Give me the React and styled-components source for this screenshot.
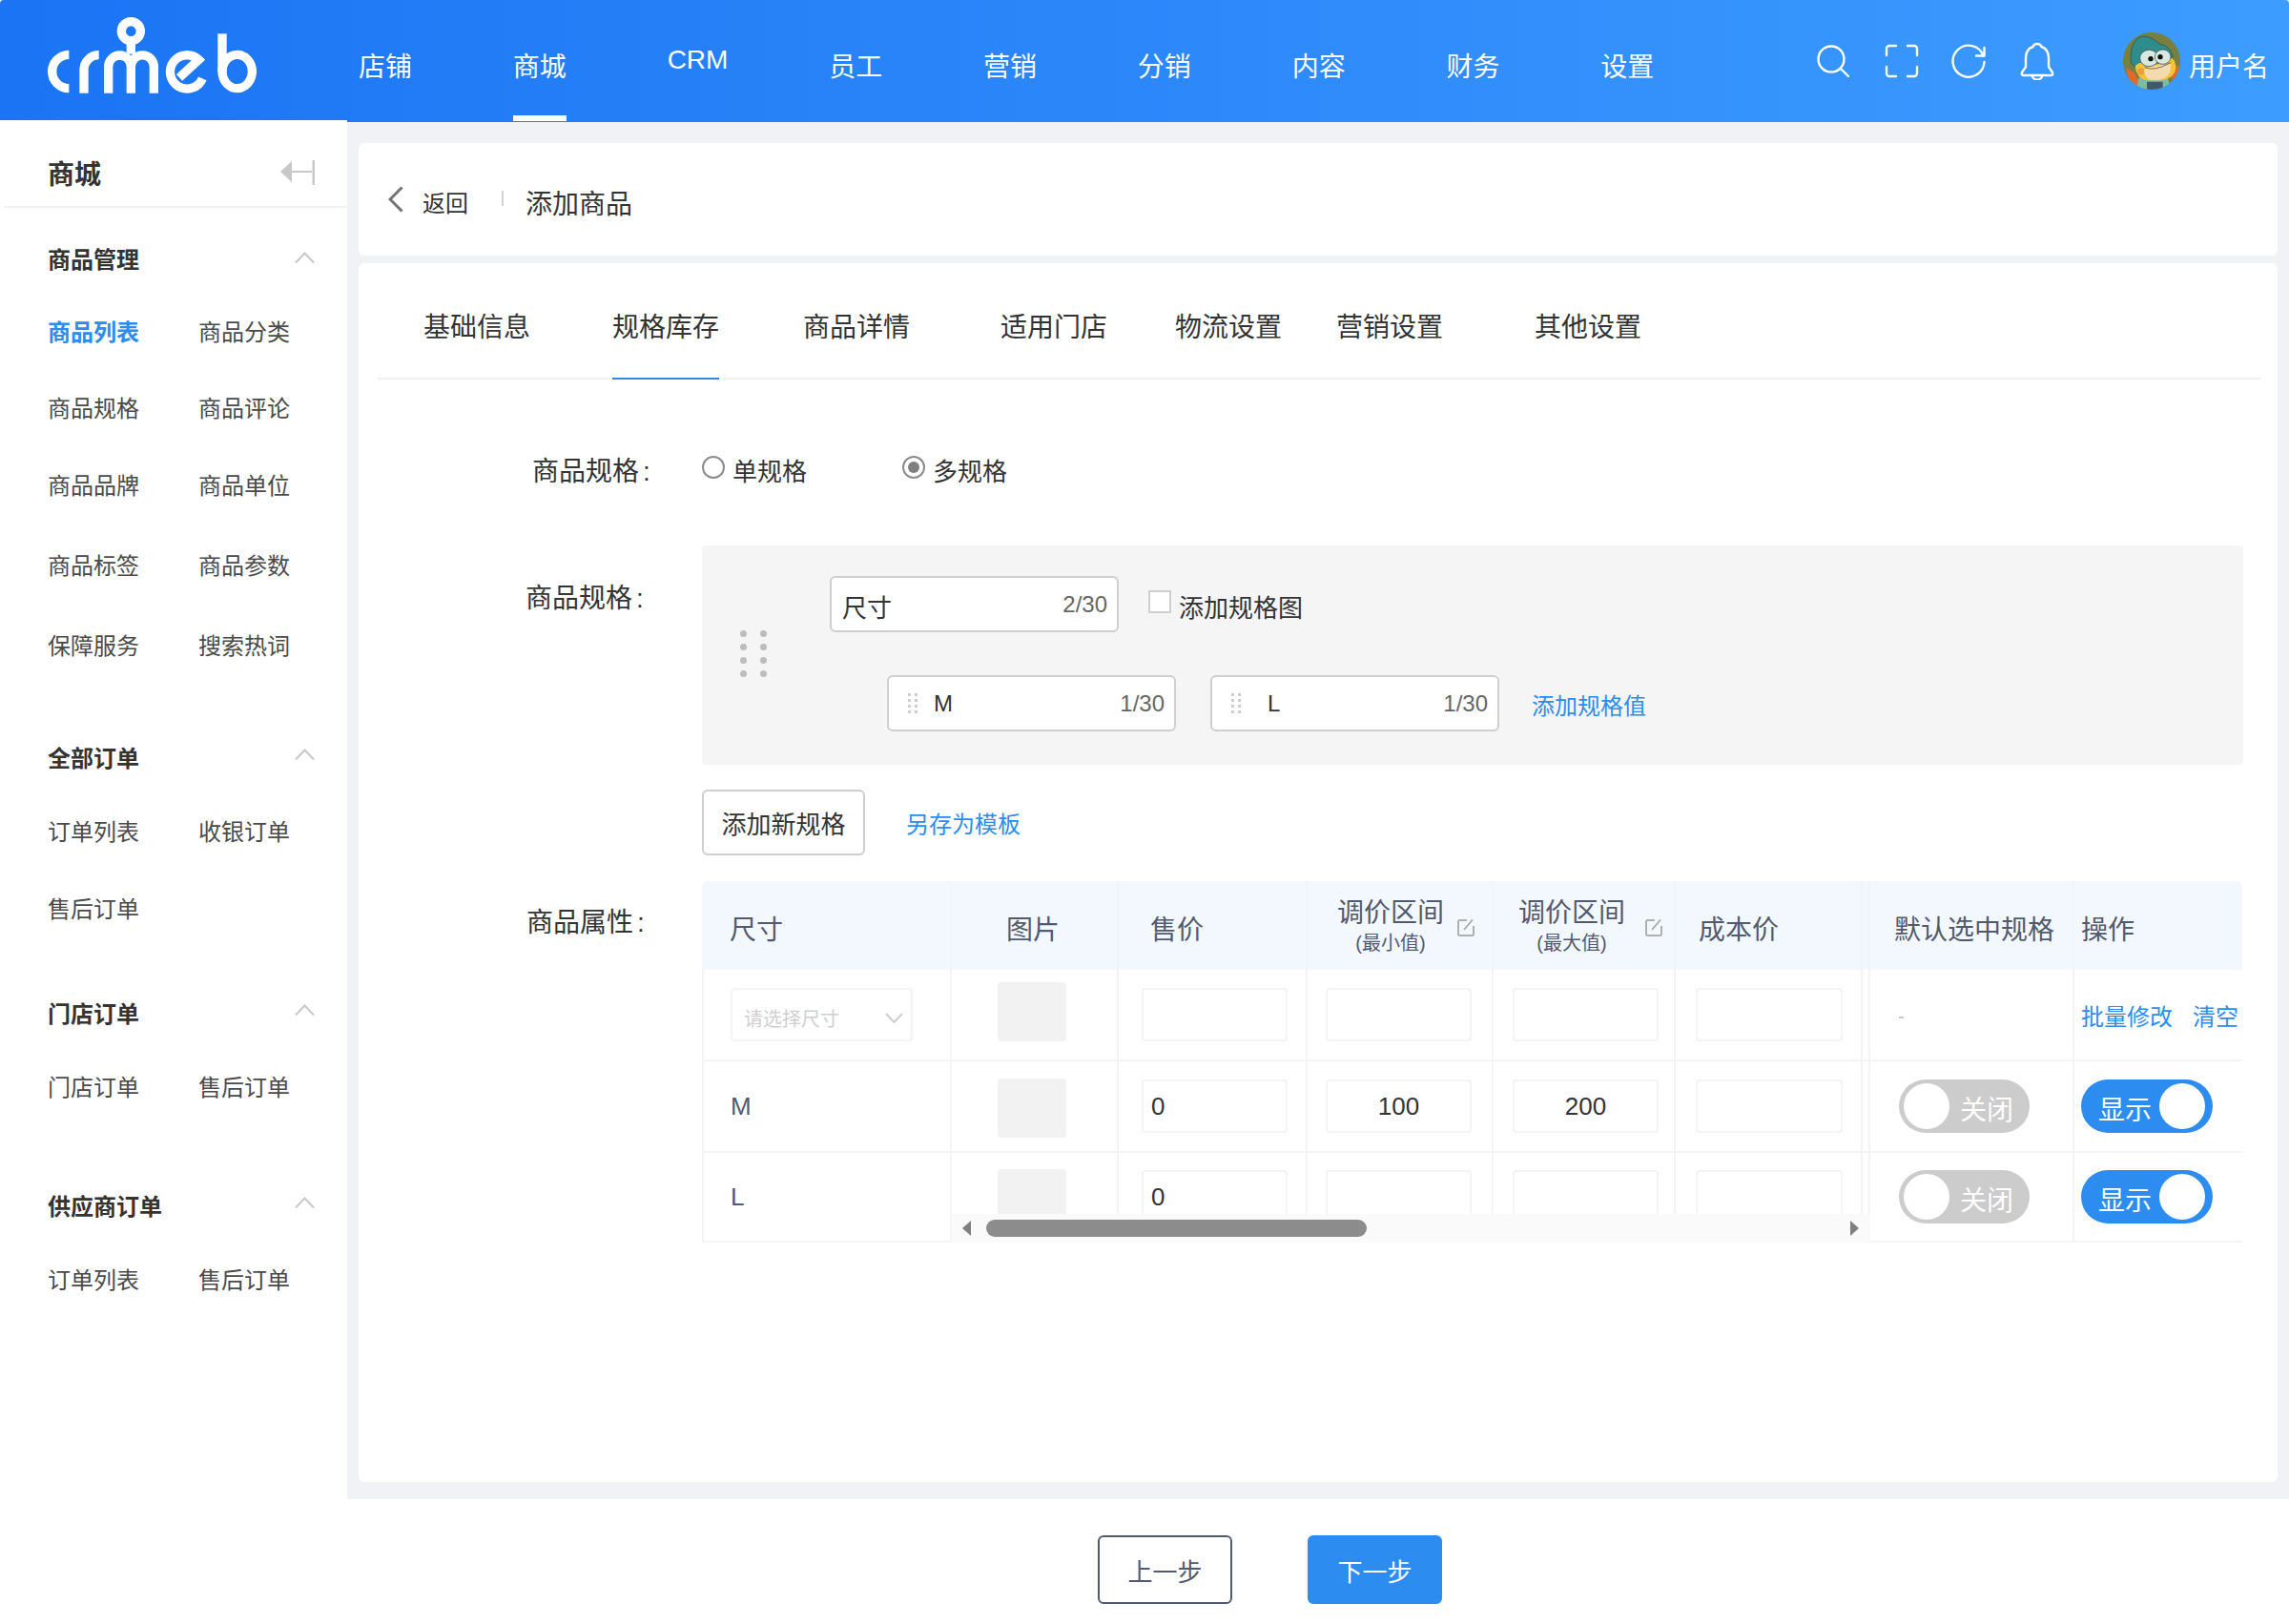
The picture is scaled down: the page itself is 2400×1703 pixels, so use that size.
import React from 'react';
import styled, {createGlobalStyle} from 'styled-components';

const GlobalStyle = createGlobalStyle`
  html, body {
    margin: 0;
    padding: 0;
    background: #fff;
  }
  body {
    font-family: "Liberation Sans", "Noto Sans CJK SC", sans-serif;
    color: #333;
  }
  * {
    box-sizing: border-box;
  }
`;

const BLUE = '#2d8cf0';
const LINE = '#f4f4f4';

const Page = styled.div`
  width: 2400px;
  height: 1703px;
  display: flex;
  flex-direction: column;
  overflow: hidden;
`;

const Header = styled.header`
  height: 128px;
  flex: none;
  display: flex;
  align-items: stretch;
  padding-left: 40px;
  border-radius: 4px 4px 0 0;
  background: linear-gradient(90deg, #1b74f4, #3d9cff);
  color: #fff;
`;

const LogoBox = styled.svg`
  width: 240px;
  height: 100px;
  margin-top: 10px;
  margin-right: 96px;
  flex: none;
`;

const Nav = styled.nav`
  display: flex;
  gap: 105.8px;
`;

const NavItem = styled.a`
  position: relative;
  display: flex;
  align-items: center;
  padding-top: ${(p) => (p.$raised ? '0' : '8px')};
  margin-top: ${(p) => (p.$raised ? '-2px' : '0')};
  font-size: 28px;

  ${(p) => p.$active && `
    &::after {
      content: '';
      position: absolute;
      left: 0;
      right: 0;
      bottom: 1px;
      height: 6px;
      background: #fff;
    }
  `}
`;

const HeaderTools = styled.div`
  margin-left: auto;
  display: flex;
  align-items: center;
  padding-right: 21px;
`;

const ToolIcon = styled.svg`
  flex: none;
  margin-right: ${(p) => p.$gap}px;
  margin-top: -1px;
  fill: none;
  stroke: #fff;
  stroke-width: 2.4;
  stroke-linecap: round;
  stroke-linejoin: round;
`;

const Avatar = styled.svg`
  width: 60px;
  height: 60px;
  margin-right: 9px;
  flex: none;
`;

const UserName = styled.span`
  font-size: 28px;
  padding-top: 8px;
`;

const Body = styled.div`
  flex: 1;
  min-height: 0;
  display: flex;
`;

const Sidebar = styled.aside`
  width: 364px;
  flex: none;
  margin-top: -2px;
  position: relative;
  background: #fff;
`;

const SideTitle = styled.div`
  height: 92px;
  margin-left: 4px;
  padding: 20px 34px 0 46px;
  display: flex;
  align-items: center;
  justify-content: space-between;
  border-bottom: 2px solid #f0f2f5;
  font-size: 28px;
  font-weight: 700;
  color: #333;
`;

const SideGroup = styled.section`
  margin-top: ${(p) => p.$top}px;
  padding-left: 50px;
`;

const SideHead = styled.div`
  height: 40px;
  padding: 0 34px ${(p) => p.$lift}px 0;
  display: flex;
  align-items: center;
  justify-content: space-between;
  font-size: 24px;
  font-weight: 700;
  color: #333;

  svg {
    margin-top: ${(p) => p.$lift - 6}px;
  }
`;

const SideItems = styled.div`
  margin-top: ${(p) => p.$top}px;
`;

const SideRow = styled.div`
  height: ${(p) => p.$h}px;
  padding-bottom: 2px;
  display: grid;
  grid-template-columns: 158px 1fr;
  align-items: center;
`;

const SideLink = styled.a`
  font-size: 24px;
  color: ${(p) => (p.$active ? BLUE : '#4a4a4a')};
  font-weight: ${(p) => (p.$active ? 700 : 400)};
`;

const Main = styled.main`
  flex: 1;
  min-width: 0;
  padding: 22px 12px 18px;
  display: flex;
  flex-direction: column;
  gap: 8px;
  background: #f0f2f5;
`;

const BackCard = styled.div`
  height: 118px;
  flex: none;
  display: flex;
  align-items: center;
  padding: 6px 0 0 31px;
  background: #fff;
  border-radius: 6px;
`;

const BackLink = styled.a`
  display: flex;
  align-items: center;
  gap: 20px;
  padding-bottom: 2px;
  font-size: 24px;
  color: #333;
  svg {
    margin-top: -4px;
  }
`;

const BackDivider = styled.span`
  width: 2px;
  height: 16px;
  margin: -8px 23px 0 35px;
  background: #d4d4d4;
`;

const PageTitle = styled.h1`
  margin: 0;
  font-size: 28px;
  font-weight: 400;
  color: #333;
`;

const ContentCard = styled.div`
  flex: 1;
  min-height: 0;
  background: #fff;
  border-radius: 6px;
`;

const Tabs = styled.div`
  height: 122px;
  margin: 0 18px 0 20px;
  padding-left: 48px;
  display: flex;
  border-bottom: 2px solid #f0f0f0;
`;

const Tab = styled.a`
  position: relative;
  display: flex;
  align-items: center;
  padding-top: 10px;
  margin-right: ${(p) => p.$gap}px;
  font-size: 28px;
  color: #333;

  ${(p) => p.$active && `
    &::after {
      content: '';
      position: absolute;
      left: 0;
      right: 0;
      bottom: -2px;
      height: 2px;
      background: ${BLUE};
    }
  `}
`;

const Form = styled.div`
  padding-top: 76px;
`;

const FormRow = styled.div`
  display: flex;
  align-items: flex-start;
  margin-top: ${(p) => p.$top || 0}px;
`;

const FormLabel = styled.label`
  width: 360px;
  flex: none;
  height: 40px;
  margin-top: ${(p) => p.$top || 0}px;
  padding-left: ${(p) => p.$pad}px;
  line-height: 40px;
  font-size: 28px;
  color: #333;

  span {
    margin-left: 4px;
  }
`;

const FormBody = styled.div`
  flex: 1;
  min-width: 0;
`;

const RadioGroup = styled.div`
  display: flex;
  align-items: center;
  gap: 100px;
  height: 36px;
`;

const RadioOption = styled.span`
  display: flex;
  align-items: center;
  gap: 8px;
  font-size: 26px;
  color: #333;
`;

const RadioMark = styled.i`
  width: 24px;
  height: 24px;
  margin-top: -4px;
  border: 2px solid #8c8c8c;
  border-radius: 50%;
  display: flex;
  align-items: center;
  justify-content: center;

  &::after {
    content: '';
    width: 12px;
    height: 12px;
    border-radius: 50%;
    background: ${(p) => (p.$on ? '#7f7f7f' : 'transparent')};
  }
`;

const SpecPanel = styled.div`
  width: 1616px;
  height: 230px;
  padding: 0 0 3px 40px;
  display: flex;
  align-items: center;
  background: #f5f5f5;
  border-radius: 4px;
`;

const DragDots = styled.div`
  width: 28px;
  margin-right: 66px;
  flex: none;
  display: grid;
  grid-template-columns: repeat(2, 7px);
  justify-content: space-between;
  row-gap: 7px;

  i {
    height: 7px;
    border-radius: 50%;
    background: #bdbdbd;
  }
`;

const SpecBody = styled.div`
  display: flex;
  flex-direction: column;
  gap: 45px;
`;

const SpecLine = styled.div`
  display: flex;
  align-items: center;
  margin-left: ${(p) => p.$indent || 0}px;
`;

const SpecInput = styled.div`
  width: 303px;
  height: 59px;
  flex: none;
  margin-right: ${(p) => p.$gap}px;
  display: flex;
  align-items: center;
  padding: 0 10px 0 11px;
  background: #fff;
  border: 2px solid #cfcfcf;
  border-radius: 6px;
`;

const SpecValue = styled.span`
  flex: 1;
  padding-top: ${(p) => p.$down || 0}px;
  font-size: ${(p) => p.$size}px;
  color: #333;
`;

const Counter = styled.span`
  font-size: 24px;
  color: #666;
`;

const GripDots = styled.div`
  width: 10px;
  margin: 0 ${(p) => p.$after}px 0 9px;
  flex: none;
  display: grid;
  grid-template-columns: repeat(2, 3px);
  justify-content: space-between;
  row-gap: 3px;

  i {
    height: 3px;
    background: #cdcdcd;
  }
`;

const CheckBox = styled.i`
  width: 24px;
  height: 24px;
  margin: -6px 8px 0 0;
  flex: none;
  background: #fff;
  border: 2px solid #cfcfcf;
`;

const PlainText = styled.span`
  padding-top: 4px;
  font-size: 26px;
  color: #333;
`;

const TextLink = styled.a`
  padding-top: ${(p) => p.$down || 0}px;
  font-size: 24px;
  color: ${BLUE};
`;

const ButtonLine = styled.div`
  margin-top: 26px;
  display: flex;
  align-items: center;
  gap: 43px;
`;

const OutlineButton = styled.button`
  width: 171px;
  height: 69px;
  padding: 0;
  background: #fff;
  border: 2px solid #cfcfcf;
  border-radius: 6px;
  font: inherit;
  font-size: 26px;
  color: #333;
`;

const TableWrap = styled.div`
  position: relative;
  width: 1615px;
  display: grid;
  grid-template-columns: 262px 175px 198px 195px 191px 204px 214px 176px;
  grid-template-rows: 93px 96px 96px 94px;
  color: #515a6e;
`;

const HeadCell = styled.div`
  display: flex;
  align-items: center;
  padding-top: 4px;
  padding-left: ${(p) => p.$pad}px;
  background: #f3f7fe;
  border-right: ${(p) => (p.$last ? '0' : '2px solid #f0f4fb')};
  font-size: 28px;
  color: #515a6e;
  ${(p) => p.$edge && 'box-shadow: inset -6px 0 0 #f3f7fe, inset -8px 0 0 #eff3fa;'}
  ${(p) => p.$first && 'border-radius: 6px 0 0 0;'}
  ${(p) => p.$last && 'border-radius: 0 6px 0 0;'}
`;

const RangeTitle = styled.div`
  display: flex;
  flex-direction: column;
  align-items: center;
  margin-right: ${(p) => p.$gap}px;
  margin-top: -4px;
  line-height: 36px;

  small {
    font-size: 20px;
    line-height: 26px;
  }
`;

const EditIcon = styled.svg`
  width: 20px;
  height: 20px;
  margin-top: 0;
  fill: none;
  stroke: #a3a3a3;
  stroke-width: 1.6;
`;

const Cell = styled.div`
  display: flex;
  align-items: center;
  padding-left: ${(p) => p.$pad}px;
  border-bottom: 2px solid ${LINE};
  border-right: ${(p) => (p.$last ? '0' : `2px solid ${LINE}`)};
  ${(p) => p.$first && `border-left: 2px solid ${LINE};`}
  ${(p) => p.$edge && `box-shadow: inset -6px 0 0 #fff, inset -8px 0 0 ${LINE};`}
  font-size: 26px;
  background: #fff;
`;

const SizeSelect = styled.div`
  width: 191px;
  height: 56px;
  display: flex;
  align-items: center;
  justify-content: space-between;
  padding: 6px 8px 0 12px;
  border: 2px solid ${LINE};
  border-radius: 4px;
  font-size: 20px;
  color: #cfcfcf;
`;

const ImageSlot = styled.div`
  width: 72px;
  height: 62px;
  margin-top: ${(p) => p.$shift}px;
  background: #f2f2f2;
  border-radius: 4px;
`;

const PriceInput = styled.div`
  width: ${(p) => p.$w}px;
  height: 56px;
  display: flex;
  align-items: center;
  justify-content: ${(p) => (p.$center ? 'center' : 'flex-start')};
  padding-left: ${(p) => (p.$center ? 0 : 8)}px;
  border: 2px solid ${LINE};
  border-radius: 4px;
  font-size: 26px;
  color: #333;
`;

const Dash = styled.span`
  width: 5px;
  height: 2px;
  background: #c8c8c8;
  margin-top: 6px;
`;

const LinkPair = styled.div`
  display: flex;
  gap: 21px;
`;

const Switch = styled.div`
  width: ${(p) => (p.$on ? 138 : 137)}px;
  height: 56px;
  display: flex;
  flex-direction: ${(p) => (p.$on ? 'row' : 'row-reverse')};
  align-items: center;
  justify-content: space-between;
  padding: 0 ${(p) => (p.$on ? 8 : 5)}px 0 ${(p) => (p.$on ? 18 : 5)}px;
  border-radius: 28px;
  background: ${(p) => (p.$on ? BLUE : '#cccccc')};
  color: #fff;
  font-size: 28px;

  span {
    margin-right: ${(p) => (p.$on ? 0 : 12)}px;
    padding-top: 4px;
  }

  i {
    width: 48px;
    height: 48px;
    border-radius: 50%;
    background: #fff;
  }
`;

const ScrollBar = styled.div`
  position: absolute;
  left: 262px;
  top: 349px;
  width: 963px;
  height: 30px;
  padding: 0 12px 0 11px;
  display: flex;
  align-items: center;
  background: #fafafa;
`;

const ScrollArrow = styled.i`
  width: 0;
  height: 0;
  border-top: 8px solid transparent;
  border-bottom: 8px solid transparent;
  ${(p) => (p.$right ? 'border-left: 9px solid #7f7f7f; margin-left: auto;' : 'border-right: 9px solid #7f7f7f; margin-right: 16px;')}
`;

const ScrollThumb = styled.div`
  width: 399px;
  height: 18px;
  border-radius: 9px;
  background: #8c8c8c;
`;

const Footer = styled.footer`
  height: 131px;
  flex: none;
  padding: 38px 0 0 1151px;
  display: flex;
  align-items: flex-start;
  gap: 79px;
  background: #fff;
`;

const StepButton = styled.button`
  width: 141px;
  height: 72px;
  padding: 0;
  border: 2px solid ${(p) => (p.$primary ? BLUE : '#515a6e')};
  border-radius: 6px;
  background: ${(p) => (p.$primary ? BLUE : '#fff')};
  color: ${(p) => (p.$primary ? '#fff' : '#515a6e')};
  font: inherit;
  font-size: 26px;
`;

const navItems = ['店铺', '商城', 'CRM', '员工', '营销', '分销', '内容', '财务', '设置'];

const sideGroups = [
  {
    title: '商品管理',
    top: 35,
    lift: 6,
    itemsTop: 14,
    rows: [
      {h: 80, items: ['商品列表', '商品分类'], activeFirst: true},
      {h: 80, items: ['商品规格', '商品评论']},
      {h: 82, items: ['商品品牌', '商品单位']},
      {h: 86, items: ['商品标签', '商品参数']},
      {h: 82, items: ['保障服务', '搜索热词']},
    ],
  },
  {
    title: '全部订单',
    top: 57,
    lift: 2,
    itemsTop: 17,
    rows: [
      {h: 80, items: ['订单列表', '收银订单']},
      {h: 82, items: ['售后订单']},
    ],
  },
  {
    title: '门店订单',
    top: 49,
    lift: 2,
    itemsTop: 17,
    rows: [{h: 80, items: ['门店订单', '售后订单']}],
  },
  {
    title: '供应商订单',
    top: 65,
    lift: 2,
    itemsTop: 17,
    rows: [{h: 80, items: ['订单列表', '售后订单']}],
  },
];

const tabs = [
  {label: '基础信息', gap: 86},
  {label: '规格库存', gap: 88, active: true},
  {label: '商品详情', gap: 95},
  {label: '适用门店', gap: 71},
  {label: '物流设置', gap: 57},
  {label: '营销设置', gap: 96},
  {label: '其他设置', gap: 0},
];

const Logo = () => (
  <LogoBox viewBox="0 0 720 300" fill="none" stroke="#fff" strokeWidth="28">
    <path d="M97 142A53 53 0 0 0 97 248" />
    <path d="M144 263V190A47 47 0 0 1 191 143" />
    <path d="M221 263V180A35.5 36 0 0 1 292 180V263M292 180A35.5 36 0 0 1 364 180V263" />
    <circle cx="292" cy="68" r="30" />
    <path d="M292 98V140" />
    <path d="M517 217A53 53 0 1 1 505 158L444 214" />
    <path d="M579 76V195" />
    <ellipse cx="626" cy="195" rx="47" ry="53" />
  </LogoBox>
);

const Frog = () => (
  <Avatar viewBox="30 23 180 180">
    <defs>
      <clipPath id="frog-clip">
        <circle cx="120" cy="113" r="90" />
      </clipPath>
    </defs>
    <g clipPath="url(#frog-clip)">
      <rect x="30" y="23" width="180" height="180" fill="#78803f" />
      <path d="M40 135L65 150L85 185L62 190Q44 170 40 135ZM206 125L176 150L190 180Q206 160 206 125Z" fill="#e4682e" />
      <path d="M80 165H170L180 205H70Z" fill="#7fbba3" />
      <path d="M105 178H155V205H105Z" fill="#41596a" />
      <path d="M56 120C48 70 70 36 92 36C118 34 132 50 146 60C165 62 182 76 186 100L70 135Z" fill="#2e8d8c" stroke="#1f4f50" strokeWidth="2" />
      <path d="M68 130Q80 112 110 122Q140 130 170 108Q190 95 196 128Q196 168 150 174H105Q72 168 68 130Z" fill="#f5c23c" />
      <path d="M96 140Q125 125 180 122Q186 165 140 172H115Q98 165 96 140Z" fill="#f4dbae" />
      <circle cx="86" cy="146" r="11" fill="#e9a23a" />
      <path d="M98 132Q125 148 180 118" fill="none" stroke="#3a3a1f" strokeWidth="2" />
      <ellipse cx="112" cy="104" rx="29" ry="26" fill="#d7e8e2" stroke="#27403f" strokeWidth="2" />
      <ellipse cx="155" cy="100" rx="25" ry="23" fill="#d7e8e2" stroke="#27403f" strokeWidth="2" />
      <circle cx="117" cy="106" r="8" fill="#111" />
      <circle cx="147" cy="100" r="8" fill="#111" />
    </g>
  </Avatar>
);

const Chevron = () => (
  <svg width="21" height="12" viewBox="0 0 21 12" fill="none" stroke="#c8c8c8" strokeWidth="2">
    <path d="M1 11.5L10.5 1.5L20 11.5" />
  </svg>
);

const EditMark = () => (
  <EditIcon viewBox="0 0 20 20">
    <path d="M11 2H3.5A1.5 1.5 0 0 0 2 3.5V16.5A1.5 1.5 0 0 0 3.5 18H16.5A1.5 1.5 0 0 0 18 16.5V8" stroke="#b0b0b0" strokeWidth="2" />
    <path d="M8 12L17 1.5" />
  </EditIcon>
);

const Grip = ({after}) => (
  <GripDots $after={after}>
    {Array.from({length: 8}, (_, i) => <i key={i} />)}
  </GripDots>
);

const dataRows = [
  {name: null, shift: -6, values: ['', '', '', ''], blank: true},
  {name: 'M', shift: 4, values: ['0', '100', '200', '']},
  {name: 'L', shift: 4, values: ['0', '', '', '']},
];

const inputCols = [
  {pad: 24, w: 153},
  {pad: 19, w: 153, center: true},
  {pad: 20, w: 153, center: true},
  {pad: 21, w: 154},
];

const App = () => (
  <>
    <GlobalStyle />
    <Page>
      <Header>
        <Logo />
        <Nav>
          {navItems.map((item) => (
            <NavItem
              key={item}
              $active={item === '商城'}
              $raised={item === 'CRM'}
            >
              {item}
            </NavItem>
          ))}
        </Nav>
        <HeaderTools>
          <ToolIcon width="34" height="34" viewBox="0 0 34 34" $gap={37}>
            <circle cx="15" cy="15" r="13.5" />
            <path d="M25 25L33 33" />
          </ToolIcon>
          <ToolIcon width="36" height="36" viewBox="0 0 36 36" $gap={34}>
            <path d="M2 12V5A3 3 0 0 1 5 2H12M24 2H31A3 3 0 0 1 34 5V12M34 24V31A3 3 0 0 1 31 34H24M12 34H5A3 3 0 0 1 2 31V24" />
          </ToolIcon>
          <ToolIcon width="36" height="36" viewBox="0 0 36 36" $gap={36}>
            <path d="M33.5 12.5A16.5 16.5 0 1 0 34.5 19" />
            <path d="M34.5 4V12.5H26" />
          </ToolIcon>
          <ToolIcon width="36" height="40" viewBox="0 0 36 40" $gap={72}>
            <path d="M18 2C15.5 2 14 3.5 13.5 5C9 6.5 6 11 6 17V26L2 32Q1 35 3.5 35H32.5Q35 35 34 32L30 26V17C30 11 27 6.5 22.5 5C22 3.5 20.5 2 18 2Z" />
            <path d="M13 35.5A5 4 0 0 0 23 35.5" />
          </ToolIcon>
          <Frog />
          <UserName>用户名</UserName>
        </HeaderTools>
      </Header>

      <Body>
        <Sidebar>
          <SideTitle>
            商城
            <svg width="36" height="26" viewBox="0 0 36 26" fill="#c8c8c8">
              <path d="M0 12L12 1V11H33V13H12V23Z" />
              <rect x="33.5" y="0" width="2.5" height="26" />
            </svg>
          </SideTitle>
          {sideGroups.map((group) => (
            <SideGroup key={group.title} $top={group.top}>
              <SideHead $lift={group.lift}>
                {group.title}
                <Chevron />
              </SideHead>
              <SideItems $top={group.itemsTop}>
                {group.rows.map((row) => (
                  <SideRow key={row.items[0]} $h={row.h}>
                    {row.items.map((item, i) => (
                      <SideLink key={item} $active={row.activeFirst && i === 0}>{item}</SideLink>
                    ))}
                  </SideRow>
                ))}
              </SideItems>
            </SideGroup>
          ))}
        </Sidebar>

        <Main>
          <BackCard>
            <BackLink>
              <svg width="16" height="28" viewBox="0 0 16 28" fill="none" stroke="#737373" strokeWidth="3">
                <path d="M14.5 1.5L2 14L14.5 26.5" />
              </svg>
              返回
            </BackLink>
            <BackDivider />
            <PageTitle>添加商品</PageTitle>
          </BackCard>

          <ContentCard>
            <Tabs>
              {tabs.map((tab) => (
                <Tab key={tab.label} $gap={tab.gap} $active={tab.active}>{tab.label}</Tab>
              ))}
            </Tabs>

            <Form>
              <FormRow>
                <FormLabel $pad={182} $top={1}>商品规格<span>:</span></FormLabel>
                <FormBody>
                  <RadioGroup>
                    <RadioOption><RadioMark />单规格</RadioOption>
                    <RadioOption><RadioMark $on />多规格</RadioOption>
                  </RadioGroup>
                </FormBody>
              </FormRow>

              <FormRow $top={57}>
                <FormLabel $pad={175} $top={36}>商品规格<span>:</span></FormLabel>
                <FormBody>
                  <SpecPanel>
                    <DragDots>
                      {Array.from({length: 8}, (_, i) => <i key={i} />)}
                    </DragDots>
                    <SpecBody>
                      <SpecLine>
                        <SpecInput $gap={31}>
                          <SpecValue $size={26} $down={4}>尺寸</SpecValue>
                          <Counter>2/30</Counter>
                        </SpecInput>
                        <CheckBox />
                        <PlainText>添加规格图</PlainText>
                      </SpecLine>
                      <SpecLine $indent={60}>
                        <SpecInput $gap={36}>
                          <Grip after={17} />
                          <SpecValue $size={24}>M</SpecValue>
                          <Counter>1/30</Counter>
                        </SpecInput>
                        <SpecInput $gap={34}>
                          <Grip after={28} />
                          <SpecValue $size={24}>L</SpecValue>
                          <Counter>1/30</Counter>
                        </SpecInput>
                        <TextLink $down={2}>添加规格值</TextLink>
                      </SpecLine>
                    </SpecBody>
                  </SpecPanel>
                  <ButtonLine>
                    <OutlineButton>添加新规格</OutlineButton>
                    <TextLink>另存为模板</TextLink>
                  </ButtonLine>
                </FormBody>
              </FormRow>

              <FormRow $top={27}>
                <FormLabel $pad={176} $top={24}>商品属性<span>:</span></FormLabel>
                <FormBody>
                  <TableWrap>
                    <HeadCell $pad={29} $first>尺寸</HeadCell>
                    <HeadCell $pad={57}>图片</HeadCell>
                    <HeadCell $pad={33}>售价</HeadCell>
                    <HeadCell $pad={31}>
                      <RangeTitle $gap={13}>调价区间<small>(最小值)</small></RangeTitle>
                      <EditMark />
                    </HeadCell>
                    <HeadCell $pad={26}>
                      <RangeTitle $gap={20}>调价区间<small>(最大值)</small></RangeTitle>
                      <EditMark />
                    </HeadCell>
                    <HeadCell $pad={24} $edge>成本价</HeadCell>
                    <HeadCell $pad={25}>默认选中规格</HeadCell>
                    <HeadCell $pad={7} $last>操作</HeadCell>

                    {dataRows.map((row) => (
                      <React.Fragment key={row.name || 'batch'}>
                        <Cell $pad={28} $first>
                          {row.blank ? (
                            <SizeSelect>
                              请选择尺寸
                              <svg width="19" height="11" viewBox="0 0 19 11" fill="none" stroke="#cfcfcf" strokeWidth="2">
                                <path d="M1 1L9.5 10L18 1" />
                              </svg>
                            </SizeSelect>
                          ) : row.name}
                        </Cell>
                        <Cell $pad={48}>
                          <ImageSlot $shift={row.shift} />
                        </Cell>
                        {inputCols.map((col, i) => (
                          <Cell key={col.pad} $pad={col.pad} $edge={i === 3}>
                            <PriceInput $w={col.w} $center={col.center}>{row.values[i]}</PriceInput>
                          </Cell>
                        ))}
                        <Cell $pad={30}>
                          {row.blank ? <Dash /> : <Switch><span>关闭</span><i /></Switch>}
                        </Cell>
                        <Cell $pad={7} $last>
                          {row.blank ? (
                            <LinkPair>
                              <TextLink>批量修改</TextLink>
                              <TextLink>清空</TextLink>
                            </LinkPair>
                          ) : (
                            <Switch $on><span>显示</span><i /></Switch>
                          )}
                        </Cell>
                      </React.Fragment>
                    ))}

                    <ScrollBar>
                      <ScrollArrow />
                      <ScrollThumb />
                      <ScrollArrow $right />
                    </ScrollBar>
                  </TableWrap>
                </FormBody>
              </FormRow>
            </Form>
          </ContentCard>
        </Main>
      </Body>

      <Footer>
        <StepButton>上一步</StepButton>
        <StepButton $primary>下一步</StepButton>
      </Footer>
    </Page>
  </>
);

export default App;
